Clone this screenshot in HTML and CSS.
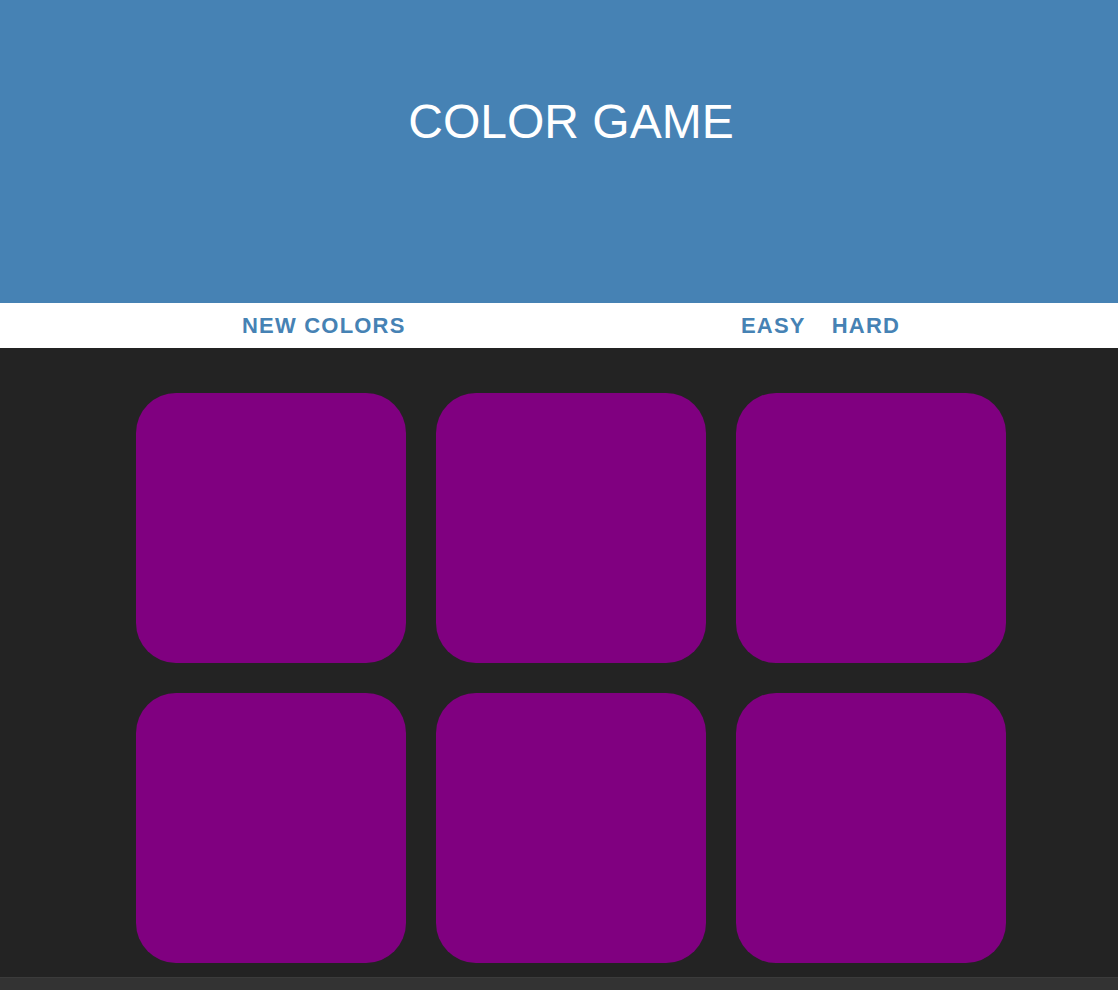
FILE: index.html
```html
<!DOCTYPE html>
<html>
<head>
<meta charset="utf-8">
<title>Color Game</title>
<link rel="stylesheet" href="styles.css">
</head>
<body>
<div class="page">
  <header class="header">
    <h1 class="title">COLOR GAME</h1>
  </header>
  <nav class="nav">
    <span class="btn btn-new">NEW COLORS</span>
    <span class="btn">EASY</span>
    <span class="btn btn-hard">HARD</span>
  </nav>
  <main class="board">
    <div class="square"></div>
    <div class="square"></div>
    <div class="square"></div>
    <div class="square"></div>
    <div class="square"></div>
    <div class="square"></div>
  </main>
  <div class="strip"></div>
</div>
</body>
</html>
```
FILE: styles.css
```css
html, body {
  margin: 0;
  padding: 0;
}
body {
  background: #232323;
  font-family: "Liberation Sans", Arial, sans-serif;
}
.page {
  height: 990px;
  display: flex;
  flex-direction: column;
  overflow: hidden;
}
.header {
  height: 303px;
  background: #4682b4;
  box-sizing: border-box;
  padding: 95px 0 0 24px;
  flex: none;
}
.title {
  margin: 0;
  text-align: center;
  color: #fff;
  font-weight: normal;
  font-size: 48px;
  line-height: 54px;
}
.nav {
  height: 45px;
  background: #fff;
  display: flex;
  align-items: center;
  padding-left: 242px;
  flex: none;
}
.btn {
  color: #4682b4;
  font-weight: 700;
  font-size: 22px;
  letter-spacing: 1.2px;
  line-height: 26px;
}
.btn-new {
  width: 499px;
}
.btn-hard {
  margin-left: 26px;
}
.board {
  flex: 1;
  display: grid;
  grid-template-columns: repeat(3, 270px);
  grid-auto-rows: 270px;
  gap: 30px;
  justify-content: center;
  align-content: start;
  padding: 45px 0 0 24px;
}
.square {
  background: #800080;
  border-radius: 40px;
}
.strip {
  height: 12px;
  flex: none;
  background: #333333;
  border-top: 1px solid #3b3b3b;
}
```
